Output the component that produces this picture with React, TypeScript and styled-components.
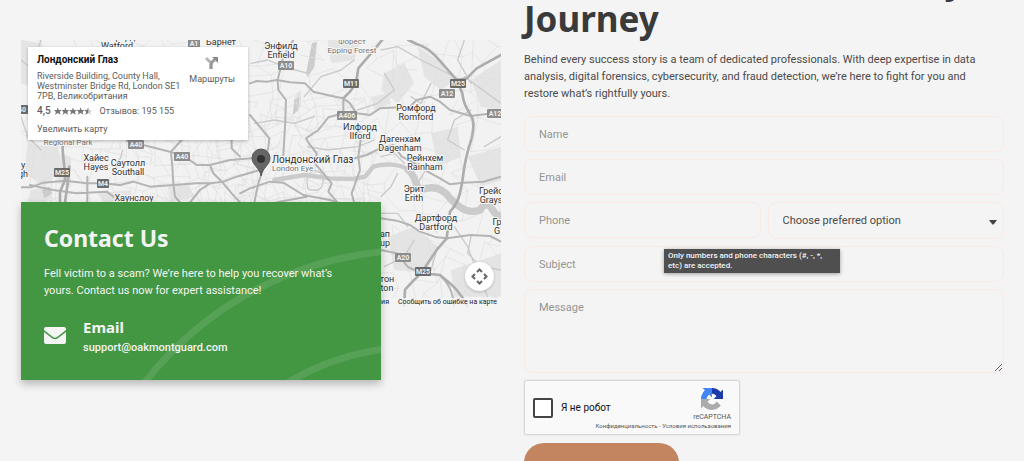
import React from "react";
import styled, { createGlobalStyle } from "styled-components";

const GlobalStyle = createGlobalStyle`
  *, *::before, *::after { box-sizing: border-box; }
  body {
    margin: 0;
    background: #f4f4f4;
    color: #4a4a4a;
    font-family: Roboto, "Noto Sans", sans-serif;
    font-size: 11px;
  }
  h1, h2, h3, p, address { margin: 0; font-style: normal; }
  button, input, select, textarea { font: inherit; color: inherit; margin: 0; }
`;

const Page = styled.main`
  display: grid;
  grid-template-columns: 1fr 1fr;
  column-gap: 23px;
  height: 100vh;
  padding: 0 20px 0 21px;
  overflow: hidden;
`;

const ContactColumn = styled.section`
  min-width: 0;
  padding-top: 40px;
`;

/* ---------- map ---------- */

const MapFrame = styled.div`
  position: relative;
  height: 267px;
  overflow: hidden;
  background: #f2f2f2;
`;

const MapDrawing = styled.svg`
  display: block;
  width: 100%;
  height: 100%;
`;

const PlaceCard = styled.article`
  position: absolute;
  top: 7px;
  left: 7px;
  display: flex;
  justify-content: space-between;
  width: 220px;
  height: 93px;
  padding: 7px 13px 0 9px;
  background: #fff;
  color: #5b5b5b;
  font-size: 9px;
  line-height: 10px;
  box-shadow: 0 1px 3px rgba(0, 0, 0, 0.25);
`;

const PlaceInfo = styled.div`
  display: flex;
  flex-direction: column;
  align-items: flex-start;
  gap: 5px;
  white-space: nowrap;
`;

const PlaceName = styled.h3`
  color: #111;
  font-size: 10px;
  font-weight: 700;
  line-height: 12px;
`;

const Rating = styled.p`
  display: flex;
  align-items: center;
  gap: 3px;
`;

const Score = styled.strong`
  font-size: 10px;
  font-weight: 500;
`;

const Stars = styled.svg`
  width: 38px;
  height: 8px;
  margin-right: 5px;
`;

const MapLink = styled.a`
  color: inherit;
  text-decoration: none;
`;

const EnlargeLink = styled(MapLink)`
  padding-top: 3px;
`;

const RouteLink = styled(MapLink)`
  display: flex;
  flex-direction: column;
  align-items: center;
  gap: 4px;
  padding-top: 2px;
`;

const PanButton = styled.button`
  position: absolute;
  right: 7px;
  bottom: 16px;
  display: grid;
  place-items: center;
  width: 29px;
  height: 29px;
  padding: 0;
  border: 0;
  border-radius: 50%;
  background: #fff;
  box-shadow: 0 1px 3px rgba(0, 0, 0, 0.2);
`;

const MapLegal = styled.div`
  position: absolute;
  right: 0;
  bottom: 0;
  display: flex;
  gap: 9px;
  padding: 0 4px;
  background: rgba(245, 245, 245, 0.8);
  color: #222;
  font-size: 7px;
  line-height: 9px;
`;

const LegalLink = styled.a`
  color: inherit;
  text-decoration: none;
`;

type Pt = [number, number];

/* Irregular mesh of local streets, the same on every render. */
function localStreets(x0: number, y0: number, w: number, h: number, step: number, seed: number): string {
  let s = seed;
  const rnd = () => {
    s = (s * 16807) % 2147483647;
    return s / 2147483647;
  };
  const cols = Math.ceil(w / step) + 1;
  const rows = Math.ceil(h / step) + 1;
  const pts: Pt[][] = [];
  for (let r = 0; r < rows; r++) {
    const line: Pt[] = [];
    for (let c = 0; c < cols; c++) {
      line.push([
        Math.round(x0 + c * step + (rnd() - 0.5) * step * 1.1 + r * 2),
        Math.round(y0 + r * step + (rnd() - 0.5) * step * 1.1),
      ]);
    }
    pts.push(line);
  }
  let d = "";
  for (let r = 0; r < rows; r++) {
    for (let c = 0; c < cols; c++) {
      const [x, y] = pts[r][c];
      if (c + 1 < cols && rnd() > 0.25) d += `M${x} ${y}L${pts[r][c + 1].join(" ")}`;
      if (r + 1 < rows && rnd() > 0.25) d += `M${x} ${y}L${pts[r + 1][c].join(" ")}`;
    }
  }
  return d;
}

const streets = [
  localStreets(0, 0, 1440, 800, 52, 11),
  localStreets(560, 170, 460, 460, 30, 77),
  localStreets(240, 300, 400, 220, 36, 5),
];

const parks = [
  "M0 0L60 10L110 90L60 150L0 130Z",
  "M20 310L110 320L125 380L70 440L10 400Z",
  "M30 450L75 440L95 470L50 500L20 480Z",
  "M120 340L150 350L150 440L110 430Z",
  "M230 460L330 450L330 485L250 490Z",
  "M440 440L500 430L520 470L450 487Z",
  "M1090 100L1150 70L1180 130L1130 190L1080 150Z",
  "M920 0L1020 0L1000 60L930 70Z",
  "M1190 20L1250 60L1300 120L1260 150L1210 110Z",
  "M1350 120L1440 60L1440 210L1380 200Z",
  "M1050 170L1100 160L1110 190L1060 210Z",
  "M1230 280L1310 260L1320 350L1250 380Z",
  "M1100 590L1180 560L1250 620L1210 700L1120 690Z",
  "M1290 690L1440 640L1440 770L1300 770Z",
  "M1340 350L1440 320L1440 420L1380 440Z",
  "M820 170L840 150L840 200L820 220Z",
];

const reservoirs = [
  "M873 10L888 5L880 80L860 112L855 100Z",
  "M63 450L85 440L95 460L70 475Z",
  "M820 180L835 170L832 210L815 225Z",
];

const minorRoads = [
  "M1000 60L960 90L900 110L850 170M1320 120L1260 90L1200 60L1130 20L1080 30M1330 110L1440 190M1350 130L1310 60L1330 0",
  "M1090 100L1120 150L1070 190L1010 210M1230 130L1200 190L1170 170M1350 210L1300 240L1280 300L1330 330",
  "M305 330L300 350L275 400M330 480L290 487M1130 400L1110 440L1080 470M1220 380L1190 430",
  "M690 70L740 60L790 80L860 100M700 250L760 240L820 250L880 230M860 320L920 330L1010 320L1060 300",
  "M1390 320L1440 290M1300 560L1340 620L1370 700L1400 770M1250 620L1230 690M1090 680L1150 650L1180 600",
  "M60 0L40 60L80 120M0 60L60 110L90 190M0 230L20 290L60 330",
  "M860 440C850 400 880 380 900 400C915 430 900 455 880 450C865 450 860 450 860 440",
  "M1350 590L1340 640L1380 680L1440 690M1070 520L1130 520L1160 560M1080 350L1120 340L1150 370",
];

const majorRoads = [
  "M0 442L30 442L67 428L132 422L197 430L247 430L297 435L337 425L387 440L457 435L527 430L567 430L607 425L647 410L717 390",
  "M317 302L367 315L447 335L492 350L527 375L567 375L627 360L692 355",
  "M482 300L450 335L454 380L457 430L462 470L477 487",
  "M567 375L577 400L607 430L632 460L657 487M632 300L632 325L657 350",
  "M27 435L97 450L167 460L257 455L277 470M199 410L199 487M507 487L537 450L567 430",
  "M687 130L707 123L737 125L767 120L807 127L852 130L877 155L932 168L967 175L987 190L1007 220L1047 225L1077 205L1167 200L1187 180L1227 170L1257 185L1287 210L1349 228L1397 222L1440 220",
  "M817 0L787 50L770 120L772 150L795 180L792 260L787 345",
  "M687 225L712 255L745 295L742 320L732 370L712 430L700 487",
  "M967 175L967 220L922 232L892 270L855 295L867 315L887 340L882 370L932 430L922 455L949 487",
  "M1012 260L1019 300L1012 350L1017 390L992 460L999 487",
  "M1002 355L1037 345L1077 325L1117 315L1142 350L1172 365L1220 395L1257 415L1287 433L1327 428L1387 425L1440 410",
  "M657 460L687 445L747 425L787 428L847 465L927 480L949 487M767 487L857 470",
  "M1079 535L1127 542L1167 555L1197 575L1247 592L1279 595L1347 585L1407 588L1440 605",
  "M1079 630L1127 640L1147 660C1152 680 1167 688 1192 692",
  "M1257 705C1277 725 1297 750 1299 801",
];

const motorways = [
  "M1083 0C1057 35 1032 60 1012 85L1005 130L987 155L967 175",
  "M1162 0L1187 12C1227 25 1247 50 1272 80L1307 120L1324 160C1327 190 1337 205 1349 225C1362 245 1357 270 1352 295C1342 325 1330 370 1326 410C1319 460 1312 490 1287 515L1277 595L1247 630L1207 690C1187 715 1167 730 1152 750L1149 801",
  "M1307 120L1337 115L1367 85L1440 45",
  "M1207 700L1257 705C1287 730 1317 750 1340 801",
  "M125 300C122 350 135 390 132 420L117 455L117 487M145 380L140 430L132 487",
];

interface Place {
  x: number;
  y: number;
  lines: string[];
  size?: number;
  dim?: boolean;
}

const places: Place[] = [
  { x: 96, y: 0, lines: ["Уотфорд", "Watford"] },
  { x: 200, y: 5, lines: ["Барнет"] },
  { x: 260, y: 9, lines: ["Энфилд", "Enfield"] },
  { x: 331, y: 4, lines: ["Форест", "Epping Forest"], size: 8, dim: true },
  { x: 395, y: 71, lines: ["Ромфорд", "Romford"] },
  { x: 339, y: 90, lines: ["Илфорд", "Ilford"] },
  { x: 379, y: 102, lines: ["Дагенхам", "Dagenham"] },
  { x: 404, y: 121, lines: ["Рейнхем", "Rainham"] },
  { x: 393, y: 152, lines: ["Эрит", "Erith"] },
  { x: 470, y: 154, lines: ["Грейс", "Grays"] },
  { x: 415, y: 181, lines: ["Дартфорд", "Dartford"] },
  { x: 476, y: 185, lines: ["Гр", "G"] },
  { x: 364, y: 197, lines: ["ап", "up"] },
  { x: 366, y: 242, lines: ["тон", "ton"] },
  { x: 47, y: 105, lines: ["Regional Park"], size: 8, dim: true },
  { x: 75, y: 121, lines: ["Хайес", "Hayes"] },
  { x: 107, y: 126, lines: ["Саутолл", "Southall"] },
  { x: 113, y: 161, lines: ["Хаунслоу"] },
  { x: 2, y: 128, lines: ["у", "gh"] },
];

interface Shield {
  x: number;
  y: number;
  label: string;
  dark?: boolean;
}

const shields: Shield[] = [
  { x: 173, y: 3, label: "A1" },
  { x: 265, y: 25, label: "A10" },
  { x: 330, y: 43, label: "M11", dark: true },
  { x: 437, y: 43, label: "M25", dark: true },
  { x: 426, y: 53, label: "A12" },
  { x: 326, y: 75, label: "A406" },
  { x: 474, y: 73, label: "A12" },
  { x: 115, y: 104, label: "A40" },
  { x: 161, y: 116, label: "A40" },
  { x: 41, y: 132, label: "M25", dark: true },
  { x: 82, y: 143, label: "M4", dark: true },
  { x: 382, y: 217, label: "A20" },
  { x: 402, y: 231, label: "M25", dark: true },
  { x: 1, y: 69, label: "40", dark: true },
];

const MapText = styled.text<{ $size: number; $dim?: boolean; $anchor?: string }>`
  font-family: Roboto, sans-serif;
  font-size: ${(p) => p.$size}px;
  fill: ${(p) => (p.$dim ? "#777" : "#333")};
  stroke: #f6f6f6;
  stroke-width: 2px;
  stroke-linejoin: round;
  paint-order: stroke;
  text-anchor: ${(p) => p.$anchor ?? "middle"};
`;

const ShieldText = styled.text`
  font-family: Roboto, sans-serif;
  font-size: 7px;
  font-weight: 700;
  fill: #eee;
  text-anchor: middle;
`;

function MapArt() {
  return (
    <MapDrawing viewBox="0 0 480 267" preserveAspectRatio="xMinYMin slice" role="img" aria-label="London Eye">
      <g transform="scale(0.33333)" fill="none" strokeLinejoin="round" strokeLinecap="round">
        {parks.map((d) => (
          <path key={d} d={d} fill="#e4e4e4" />
        ))}
        {reservoirs.map((d) => (
          <path key={d} d={d} fill="#cccccc" />
        ))}
        {streets.map((d) => (
          <path key={d.slice(0, 24)} d={d} stroke="#dfdfdf" strokeWidth={2} />
        ))}
        <path
          d="M760 420L850 405L927 415L997 417L1032 410L1057 380C1087 370 1137 370 1162 390"
          stroke="#cbcbcb"
          strokeWidth={13}
        />
        <path
          d="M1162 390C1187 410 1182 440 1197 450C1237 435 1267 445 1287 475C1327 515 1347 520 1377 510C1397 480 1407 495 1422 520L1440 530"
          stroke="#cbcbcb"
          strokeWidth={22}
        />
        {minorRoads.map((d) => (
          <path key={d} d={d} stroke="#cacaca" strokeWidth={4} />
        ))}
        {majorRoads.map((d) => (
          <path key={d} d={d} stroke="#b4b4b4" strokeWidth={6} />
        ))}
        {motorways.map((d) => (
          <path key={d} d={d} stroke="#adadad" strokeWidth={8} />
        ))}
      </g>
      {shields.map((s) => {
        const w = s.label.length * 4 + 4;
        return (
          <g key={`${s.x}-${s.y}`}>
            <rect x={s.x - w / 2} y={s.y - 4} width={w} height={9} rx={1} fill={s.dark ? "#6b6b6b" : "#8d8d8d"} />
            <ShieldText x={s.x} y={s.y + 3}>
              {s.label}
            </ShieldText>
          </g>
        );
      })}
      {places.map((p) => (
        <MapText key={p.lines[0]} $size={p.size ?? 9} $dim={p.dim}>
          {p.lines.map((line, i) => (
            <tspan key={line} x={p.x} y={p.y + i * 9}>
              {line}
            </tspan>
          ))}
        </MapText>
      ))}
      <MapText $size={10} $anchor="start" x={251} y={123}>
        Лондонский Глаз
      </MapText>
      <MapText $size={8} $dim $anchor="start" x={251} y={131}>
        London Eye
      </MapText>
      <path d="M240 136C239 128 231 125 231 118A9 9 0 0 1 249 118C249 125 241 128 240 136Z" fill="#666" stroke="#555" />
      <circle cx={240} cy={119} r={4} fill="#333" />
    </MapDrawing>
  );
}

const starPath = "M4 0L5 3H8L6 5L7 8L4 6L1 8L2 5L0 3H3Z";

function StarRow() {
  return (
    <Stars viewBox="0 0 40 8" aria-hidden="true">
      {[0, 1, 2, 3].map((i) => (
        <path key={i} d={starPath} transform={`translate(${i * 8} 0)`} fill="#777" />
      ))}
      <path d={starPath} transform="translate(32 0)" fill="#ccc" />
      <path d="M4 0V6L1 8L2 5L0 3H3Z" transform="translate(32 0)" fill="#777" />
    </Stars>
  );
}

/* ---------- green contact card ---------- */

const ContactCard = styled.section`
  position: relative;
  width: 75%;
  height: 178px;
  margin-top: -105px;
  padding: 22px 23px 0;
  background: #439742;
  color: #f4f4f4;
  box-shadow: 0 4px 8px rgba(0, 0, 0, 0.25);
`;

const Rings = styled.svg`
  position: absolute;
  inset: 0;
  width: 100%;
  height: 100%;
`;

const CardBody = styled.div`
  position: relative;
`;

const CardTitle = styled.h2`
  font-family: "Noto Sans", sans-serif;
  font-size: 23px;
  font-weight: 700;
  line-height: 28px;
`;

const CardText = styled.p`
  max-width: 304px;
  margin-top: 13px;
  line-height: 17px;
`;

const MailRow = styled.div`
  display: flex;
  align-items: center;
  gap: 17px;
  margin-top: 18px;
`;

const MailIcon = styled.svg`
  width: 22px;
  height: 17px;
  margin-bottom: 6px;
`;

const MailLabel = styled.h3`
  font-family: "Noto Sans", sans-serif;
  font-size: 15px;
  font-weight: 700;
  line-height: 20px;
`;

const MailLink = styled.a`
  display: block;
  color: inherit;
  font-size: 11px;
  font-weight: 500;
  line-height: 22px;
  text-decoration: none;
`;

/* ---------- form ---------- */

const FormColumn = styled.section`
  min-width: 0;
`;

const Headline = styled.h1`
  margin-top: -40px;
  color: #3a3a3a;
  font-family: "Noto Sans", sans-serif;
  font-size: 35px;
  font-weight: 700;
  line-height: 39px;
`;

const Intro = styled.p`
  max-width: 472px;
  margin-top: 13px;
  line-height: 17px;
`;

const Form = styled.form`
  display: flex;
  flex-direction: column;
  align-items: stretch;
  gap: 7px;
  margin-top: 14px;
`;

const fieldBase = `
  width: 100%;
  border: 1px solid #fbe9e4;
  border-radius: 8px;
  background: transparent;
  font-size: 11px;
  outline: none;
  &::placeholder { color: #959595; opacity: 1; }
`;

const Field = styled.input`
  ${fieldBase}
  height: 36px;
  padding: 0 14px;
`;

const Area = styled.textarea`
  ${fieldBase}
  display: block;
  height: 84px;
  padding: 9px 14px;
  line-height: 17px;
  resize: vertical;
`;

const FieldRow = styled.div`
  position: relative;
  display: grid;
  grid-template-columns: 1fr 1fr;
  gap: 7px;
`;

const SelectBox = styled.div`
  position: relative;
`;

const Select = styled.select`
  ${fieldBase}
  height: 37px;
  padding: 0 14px;
  appearance: none;
`;

const Caret = styled.svg`
  position: absolute;
  top: 18px;
  right: 7px;
  width: 8px;
  height: 5px;
  pointer-events: none;
`;

const Tooltip = styled.div`
  position: absolute;
  top: 47px;
  left: 140px;
  width: 176px;
  padding: 2px 4px;
  background: #4f4f4f;
  color: #f4f4f4;
  font-size: 8px;
  font-weight: 500;
  line-height: 10px;
  box-shadow: 0 1px 4px rgba(0, 0, 0, 0.35);
  z-index: 1;
`;

const Captcha = styled.div`
  display: flex;
  justify-content: space-between;
  width: 216px;
  height: 55px;
  padding: 0 8px;
  border: 1px solid #d6d6d6;
  border-radius: 2px;
  background: #f9f9f9;
  box-shadow: 0 0 2px rgba(0, 0, 0, 0.12);
`;

const RobotLabel = styled.label`
  display: flex;
  align-items: center;
  gap: 8px;
  color: #111;
  font-size: 10px;
  white-space: nowrap;
`;

const RobotBox = styled.input`
  appearance: none;
  width: 20px;
  height: 20px;
  border: 2px solid #444;
  border-radius: 2px;
  background: #fff;
`;

const CaptchaBrand = styled.div`
  display: flex;
  flex-direction: column;
  align-items: flex-end;
  width: 0;
  padding-top: 7px;
  color: #555;
  white-space: nowrap;
`;

const BrandMark = styled.div`
  display: flex;
  flex-direction: column;
  align-items: center;
  gap: 2px;
  font-size: 7px;
  line-height: 10px;
`;

const CaptchaLinks = styled.div`
  font-size: 6px;
  line-height: 7px;
`;

const Submit = styled.button`
  width: 155px;
  height: 52px;
  margin-top: 1px;
  border: 0;
  border-radius: 20px;
  background: #c28560;
  color: #fff;
  font-weight: 500;
`;

export default function App() {
  return (
    <>
      <GlobalStyle />
      <Page>
        <ContactColumn>
          <MapFrame>
            <MapArt />
            <PlaceCard>
              <PlaceInfo>
                <PlaceName>Лондонский Глаз</PlaceName>
                <address>
                  Riverside Building, County Hall,
                  <br />
                  Westminster Bridge Rd, London SE1
                  <br />
                  7PB, Великобритания
                </address>
                <Rating>
                  <Score>4,5</Score>
                  <StarRow />
                  <MapLink href="#reviews">Отзывов: 195 155</MapLink>
                </Rating>
                <EnlargeLink href="#map">Увеличить карту</EnlargeLink>
              </PlaceInfo>
              <RouteLink href="#route">
                <svg width="14" height="14" viewBox="0 0 14 14" fill="none" aria-hidden="true">
                  <path d="M1 2L6 7V13" stroke="#b5b5b5" strokeWidth="3" />
                  <path d="M6 13V9Q6 7 8 5L10 4" stroke="#999" strokeWidth="3" />
                  <path d="M7 1H13V7Z" fill="#888" />
                </svg>
                Маршруты
              </RouteLink>
            </PlaceCard>
            <PanButton type="button" aria-label="Pan the map">
              <svg width="17" height="17" viewBox="0 0 17 17" fill="none" stroke="#666" strokeWidth="2" aria-hidden="true">
                <path d="M6 4L8.5 1.5L11 4M6 13L8.5 15.5L11 13M4 6L1.5 8.5L4 11M13 6L15.5 8.5L13 11" />
              </svg>
            </PanButton>
            <MapLegal>
              <LegalLink href="#terms">Условия</LegalLink>
              <LegalLink href="#report">Сообщить об ошибке на карте</LegalLink>
            </MapLegal>
          </MapFrame>

          <ContactCard>
            <Rings viewBox="0 0 360 178" preserveAspectRatio="xMaxYMax slice" aria-hidden="true">
              <g fill="none" stroke="#fff" strokeOpacity="0.1" strokeWidth="7">
                <circle cx="395" cy="392" r="344" />
                <circle cx="395" cy="392" r="247" />
              </g>
            </Rings>
            <CardBody>
              <CardTitle>Contact Us</CardTitle>
              <CardText>
                Fell victim to a scam? We’re here to help you recover what’s yours. Contact us now for expert
                assistance!
              </CardText>
              <MailRow>
                <MailIcon viewBox="0 0 22 17" fill="#f4f4f4" aria-hidden="true">
                  <path d="M2 0H20A2 2 0 0 1 22 2V3Q17 7 13 10Q11 11.500 9 10Q5 7 0 3V2A2 2 0 0 1 2 0Z" />
                  <path d="M0 5Q5 9 8.500 11.400Q11 13 13.500 11.400Q17 9 22 5V15A2 2 0 0 1 20 17H2A2 2 0 0 1 0 15Z" />
                </MailIcon>
                <div>
                  <MailLabel>Email</MailLabel>
                  <MailLink href="mailto:support@oakmontguard.com">support@oakmontguard.com</MailLink>
                </div>
              </MailRow>
            </CardBody>
          </ContactCard>
        </ContactColumn>

        <FormColumn>
          <Headline>Start Your Fund Recovery Journey</Headline>
          <Intro>
            Behind every success story is a team of dedicated professionals. With deep expertise in data analysis,
            digital forensics, cybersecurity, and fraud detection, we’re here to fight for you and restore what’s
            rightfully yours.
          </Intro>
          <Form>
            <Field type="text" placeholder="Name" aria-label="Name" />
            <Field type="email" placeholder="Email" aria-label="Email" />
            <FieldRow>
              <Field type="tel" placeholder="Phone" aria-label="Phone" aria-describedby="phone-hint" />
              <SelectBox>
                <Select aria-label="Choose preferred option" defaultValue="">
                  <option value="">Choose preferred option</option>
                </Select>
                <Caret viewBox="0 0 8 5" aria-hidden="true">
                  <path d="M0 0H8L5 4Q4 5 3 4Z" fill="#444" />
                </Caret>
              </SelectBox>
              <Tooltip id="phone-hint" role="tooltip">
                Only numbers and phone characters (#, -, *, etc) are accepted.
              </Tooltip>
            </FieldRow>
            <Field type="text" placeholder="Subject" aria-label="Subject" />
            <Area placeholder="Message" aria-label="Message" />
            <Captcha>
              <RobotLabel>
                <RobotBox type="checkbox" />Я не робот
              </RobotLabel>
              <CaptchaBrand>
                <BrandMark>
                  <svg width="22" height="22" viewBox="0 0 64 64" aria-hidden="true">
                    <path
                      fill="#1c3aa9"
                      d="M64 31.955l-.033-1.37V4.687l-7.16 7.16C50.948 4.674 42.033.093 32.05.093c-10.4 0-19.622 4.96-25.458 12.64l11.736 11.86a15.55 15.55 0 0 1 4.754-5.334c2.05-1.6 4.952-2.906 8.968-2.906.485 0 .86.057 1.135.163 4.976.393 9.288 3.14 11.828 7.124l-8.307 8.307L64 31.953"
                    />
                    <path
                      fill="#4285f4"
                      d="M31.862.094l-1.37.033H4.594l7.16 7.16C4.58 13.147 0 22.06 0 32.046c0 10.4 4.96 19.622 12.64 25.458L24.5 45.768a15.55 15.55 0 0 1-5.334-4.754c-1.6-2.05-2.906-4.952-2.906-8.968 0-.485.057-.86.163-1.135.393-4.976 3.14-9.288 7.124-11.828l8.307 8.307L31.86.095"
                    />
                    <path
                      fill="#ababab"
                      d="M.001 32.045l.033 1.37v25.898l7.16-7.16c5.86 7.173 14.774 11.754 24.76 11.754 10.4 0 19.622-4.96 25.458-12.64l-11.736-11.86a15.55 15.55 0 0 1-4.754 5.334c-2.05 1.6-4.952 2.906-8.968 2.906-.485 0-.86-.057-1.135-.163-4.976-.393-9.288-3.14-11.828-7.124l8.307-8.307c-10.522.04-22.4.066-27.295-.005"
                    />
                  </svg>
                  reCAPTCHA
                </BrandMark>
                <CaptchaLinks>
                  <LegalLink href="#privacy">Конфиденциальность</LegalLink> -{" "}
                  <LegalLink href="#usage">Условия использования</LegalLink>
                </CaptchaLinks>
              </CaptchaBrand>
            </Captcha>
            <Submit type="submit">Send Message</Submit>
          </Form>
        </FormColumn>
      </Page>
    </>
  );
}
